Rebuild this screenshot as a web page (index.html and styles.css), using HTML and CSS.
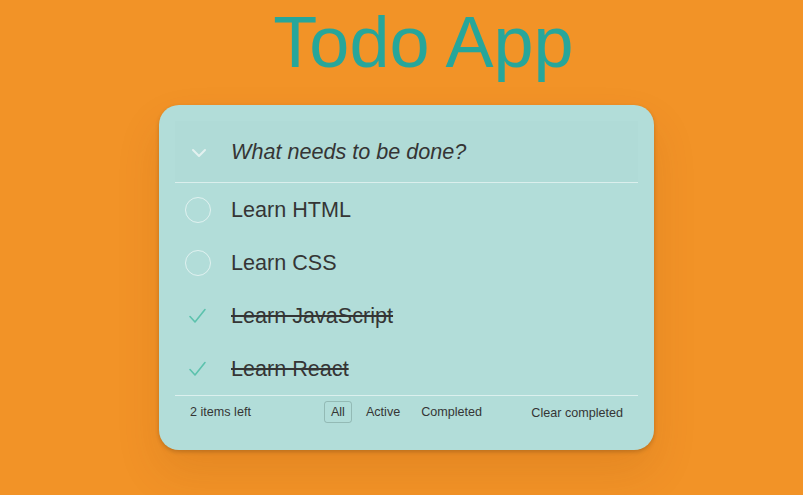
FILE: index.html
```html
<!DOCTYPE html>
<html lang="en">
<head>
<meta charset="utf-8">
<title>Todo App</title>
<link rel="stylesheet" href="styles.css">
</head>
<body>
<main class="page">
  <h1 class="title">Todo App</h1>
  <section class="card">
    <header class="new-row">
      <span class="toggle-all">
        <svg width="16" height="10" viewBox="0 0 16 10"><polyline points="2,2 8,8 14,2" fill="none" stroke="#e3f1ef" stroke-width="2" stroke-linecap="round" stroke-linejoin="round"/></svg>
      </span>
      <input class="new-todo" type="text" placeholder="What needs to be done?">
    </header>
    <ul class="list">
      <li class="item">
        <span class="check"><span class="circle"></span></span>
        <span class="label">Learn HTML</span>
      </li>
      <li class="item">
        <span class="check"><span class="circle"></span></span>
        <span class="label">Learn CSS</span>
      </li>
      <li class="item done">
        <span class="check"><svg width="26" height="26" viewBox="0 0 26 26"><polyline points="5,13.5 10,19 20,6.5" fill="none" stroke="#5cc2ad" stroke-width="1.6" stroke-linecap="round" stroke-linejoin="round"/></svg></span>
        <span class="label">Learn JavaScript</span>
      </li>
      <li class="item done">
        <span class="check"><svg width="26" height="26" viewBox="0 0 26 26"><polyline points="5,13.5 10,19 20,6.5" fill="none" stroke="#5cc2ad" stroke-width="1.6" stroke-linecap="round" stroke-linejoin="round"/></svg></span>
        <span class="label">Learn React</span>
      </li>
    </ul>
    <footer class="footer">
      <span class="count">2 items left</span>
      <nav class="filters">
        <a class="filter selected">All</a>
        <a class="filter">Active</a>
        <a class="filter">Completed</a>
      </nav>
      <span class="clear">Clear completed</span>
    </footer>
  </section>
</main>
</body>
</html>
```
FILE: styles.css
```css
* { box-sizing: border-box; }
html, body { margin: 0; padding: 0; }
body {
  background: #f29327;
  font-family: "Liberation Sans", Arial, sans-serif;
  color: #353535;
  height: 495px;
  overflow: hidden;
}
.page {
  display: flex;
  flex-direction: column;
  align-items: center;
  padding-left: 10px;
}
.title {
  margin: 0;
  padding-left: 34px;
  width: 100%;
  text-align: center;
  font-size: 72px;
  line-height: 80px;
  font-weight: normal;
  color: #27a69a;
  padding-top: 2px;
}
.card {
  margin-top: 23px;
  width: 495px;
  background: #b2ddd9;
  border-radius: 20px;
  padding: 16px 16px 22px;
  box-shadow: 0 2px 4px rgba(0,0,0,0.18), 0 22px 45px rgba(120,50,0,0.12);
}
.new-row {
  display: flex;
  align-items: center;
  height: 62px;
  background: rgba(0,0,0,0.006);
  border-bottom: 1px solid rgba(255,255,255,0.55);
}
.toggle-all {
  width: 56px;
  display: flex;
  justify-content: center;
  padding-top: 2px;
  padding-right: 8px;
}
.toggle-all svg { display: block; }
.new-todo {
  flex: 1;
  border: 0;
  background: transparent;
  font-family: inherit;
  font-size: 21.6px;
  font-style: italic;
  color: #353535;
  padding: 0;
  outline: none;
}
.new-todo::placeholder { color: #353535; opacity: 1; }
.list { list-style: none; margin: 0; padding: 0; }
.item {
  display: flex;
  align-items: center;
  height: 53px;
  font-size: 21.6px;
}
.check {
  width: 56px;
  padding-left: 10px;
  display: flex;
  align-items: center;
}
.check svg { display: block; }
.circle {
  width: 26px;
  height: 26px;
  border-radius: 50%;
  border: 1px solid rgba(255,255,255,0.6);
}
.done .label { text-decoration: line-through; text-decoration-thickness: 2px; }
.footer {
  display: grid;
  grid-template-columns: 1fr auto 1fr;
  align-items: center;
  height: 33px;
  border-top: 1px solid rgba(255,255,255,0.55);
  padding: 0 15px;
  font-size: 12.6px;
  color: #353535;
}
.filters { display: flex; gap: 7px; margin-left: 2px; margin-right: 2px; }
.filter {
  padding: 3px 6px;
  border: 1px solid transparent;
  border-radius: 3px;
}
.filter.selected { border-color: rgba(90,120,115,0.35); }
.clear { justify-self: end; padding-top: 2px; }
```
